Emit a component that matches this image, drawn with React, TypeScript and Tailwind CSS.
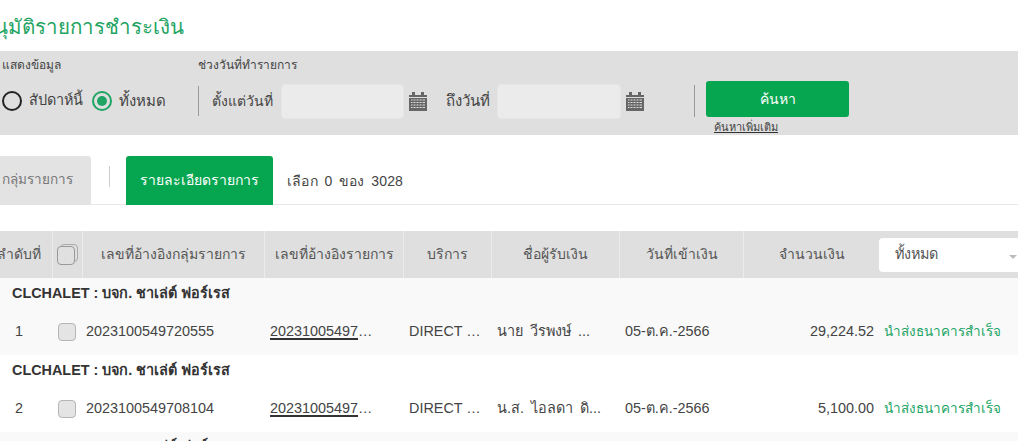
const Sans = "font-['Liberation_Sans','Noto_Sans','DejaVu_Sans',sans-serif]";

function Calendar() {
  return (
    <svg width="18" height="19" viewBox="0 0 18 19" className="shrink-0">
      <rect x="0" y="3" width="18" height="16" fill="#666" />
      <rect x="3" y="0" width="3" height="4" fill="#666" />
      <rect x="12" y="0" width="3" height="4" fill="#666" />
      <rect x="0" y="5" width="18" height="1" fill="#ddd" />
      <path d="M2 8h14M2 10.5h14M2 13h14M2 15.5h14" stroke="#ddd" strokeWidth="1" />
      <path d="M4 7v10M7 7v10M10 7v10M13 7v10" stroke="#666" strokeWidth="1" />
    </svg>
  );
}

function Check() {
  return <div className="w-[18px] h-[18px] rounded-[4px] border border-[#b5b5b5] bg-[#e4e4e4] -ml-[3px]" />;
}

const cols = "grid grid-cols-[73px_30px_182px_139px_88px_128px_124px_136px_150px]";

function Row({ n, ref1, name, amount, bg }: { n: string; ref1: string; name: string; amount: string; bg: string }) {
  return (
    <>
      <div className={`h-[32px] ${bg} pl-[32px] flex items-center font-bold text-[14.4px] text-[#333]`}>
        CLCHALET : บจก. ชาเล่ต์ ฟอร์เรส
      </div>
      <div className={`${cols} h-[45px] pb-[1px] ${bg} items-center text-[14.4px] text-[#444]`}>
        <div className="pl-[35px]">{n}</div>
        <div className="flex justify-center"><Check /></div>
        <div className="pl-[3px]">{ref1}</div>
        <div className="pl-[5px] whitespace-nowrap"><span className="underline decoration-2 decoration-[#333] underline-offset-2">20231005497</span>…</div>
        <div className="pl-[5px] whitespace-nowrap">DIRECT …</div>
        <div className="pl-[5px] whitespace-nowrap [word-spacing:3px]">{name}</div>
        <div className="pl-[5px]">05-ต.ค.-2566</div>
        <div className="text-right pr-[6px]">{amount}</div>
        <div className="pl-[4px] whitespace-nowrap text-[13.5px] text-[#22a565]">นำส่งธนาคารสำเร็จ</div>
      </div>
    </>
  );
}

function Head({ children, className = "" }: { children?: React.ReactNode; className?: string }) {
  return <div className={`flex items-center justify-center border-r border-[#ececec] h-full whitespace-nowrap ${className}`}>{children}</div>;
}

export default function App() {
  return (
    <div className={`w-[1018px] h-[441px] overflow-hidden bg-white ${Sans}`}>
      <div className="w-[1060px] -ml-[20px]">
        <h1 className="h-[51px] pl-[2px] pt-[12px] text-[20.5px] leading-[30px] text-[#1fa463] whitespace-nowrap">อนุมัติรายการชำระเงิน</h1>

        <div className="h-[84px] bg-[#dfdfdf] pl-[22px] text-[#444] relative">
          <div className="flex pt-[5px] h-[32px] text-[12px] leading-[18px]">
            <div className="w-[196px]">แสดงข้อมูล</div>
            <div>ช่วงวันที่ทำรายการ</div>
          </div>
          <div className="flex items-center h-[36px] text-[14.4px] whitespace-nowrap">
            <div className="w-[20px] h-[20px] rounded-full border-2 border-[#222] shrink-0" />
            <div className="ml-[7px]">สัปดาห์นี้</div>
            <div className="ml-[9px] w-[20px] h-[20px] rounded-full border-[2.5px] border-[#1fa463] flex items-center justify-center shrink-0">
              <div className="w-[10px] h-[10px] rounded-full bg-[#1fa463]" />
            </div>
            <div className="ml-[7px] text-[15px]">ทั้งหมด</div>
            <div className="ml-[32px] w-px h-[30px] bg-[#999]" />
            <div className="ml-[13px] text-[14px]">ตั้งแต่วันที่</div>
            <input className="ml-[8px] w-[123px] h-[35px] rounded-[4px] bg-[#ebebeb] border border-[#e6e6e6]" />
            <div className="ml-[5px]"><Calendar /></div>
            <div className="ml-[19px] text-[15px]">ถึงวันที่</div>
            <input className="ml-[7px] w-[124px] h-[35px] rounded-[4px] bg-[#ebebeb] border border-[#e6e6e6]" />
            <div className="ml-[5px]"><Calendar /></div>
            <div className="ml-[50px] w-px h-[32px] bg-[#999]" />
            <div className="ml-[11px] relative -top-[2px] w-[143px] h-[36px] rounded-[3px] bg-[#06a650] text-white text-[14px] flex items-center justify-center">ค้นหา</div>
          </div>
          <a className="absolute left-[734px] top-[68px] text-[11px] leading-[16px] text-[#444] underline decoration-[#333] whitespace-nowrap">ค้นหาเพิ่มเติม</a>
        </div>

        <div className="h-[70px] pt-[21px] flex items-start">
          <div className="w-[111px] h-[49px] pb-[1px] bg-[#e3e3e3] rounded-t-[3px] flex items-center pl-[22px] text-[13.5px] text-[#777]">กลุ่มรายการ</div>
          <div className="ml-[18px] mt-[10px] w-px h-[21px] bg-[#cfcfcf]" />
          <div className="ml-[16px] w-[147px] h-[49px] pb-[1px] bg-[#06a650] rounded-t-[3px] flex items-center justify-center text-white text-[14px]">รายละเอียดรายการ</div>
          <div className="ml-[14px] h-[50px] flex items-center text-[14px] text-[#444] tracking-[0.2px] [word-spacing:2.5px]">เลือก 0 ของ 3028</div>
        </div>
        <div className="h-px bg-[#e8e8e8] -mt-[1px]" />

        <div className="h-[26px]" />

        <div className={`${cols} h-[47px] bg-[#dfdfdf] items-center text-[14px] text-[#555]`}>
          <Head className="justify-end pr-[11px]">ลำดับที่</Head>
          <Head>
            <div className="relative w-[21px] h-[21px]">
              <div className="absolute left-[3px] top-0 w-[18px] h-[18px] rounded-[4px] border border-[#aaa]" />
              <div className="absolute left-0 top-[2px] w-[18px] h-[19px] rounded-[4px] border border-[#999] bg-[#e0e0e0]" />
            </div>
          </Head>
          <Head>เลขที่อ้างอิงกลุ่มรายการ</Head>
          <Head>เลขที่อ้างอิงรายการ</Head>
          <Head>บริการ</Head>
          <Head>ชื่อผู้รับเงิน</Head>
          <Head>วันที่เข้าเงิน</Head>
          <Head className="border-r-0">จำนวนเงิน</Head>
          <div className="h-[34px] w-[150px] -ml-[1px] bg-white rounded-l-[4px] flex items-center pl-[16px] relative text-[14.4px] text-[#555]">
            ทั้งหมด
            <div className="absolute left-[130px] top-[17px] w-0 h-0 border-x-[4px] border-x-transparent border-t-[4px] border-t-[#bbb]" />
          </div>
        </div>

        <Row n="1" ref1="2023100549720555" name="นาย วีรพงษ์ ..." amount="29,224.52" bg="bg-[#f9f9f9]" />
        <Row n="2" ref1="2023100549708104" name="น.ส. ไอลดา ดิ..." amount="5,100.00" bg="bg-white" />
        <div className="h-[32px] bg-[#f9f9f9] pl-[32px] pt-[4px] font-bold text-[14.4px] text-[#333] whitespace-nowrap">CLCHALET : บจก. ชาเล่ต์ ฟอร์เรส</div>
      </div>
    </div>
  );
}
